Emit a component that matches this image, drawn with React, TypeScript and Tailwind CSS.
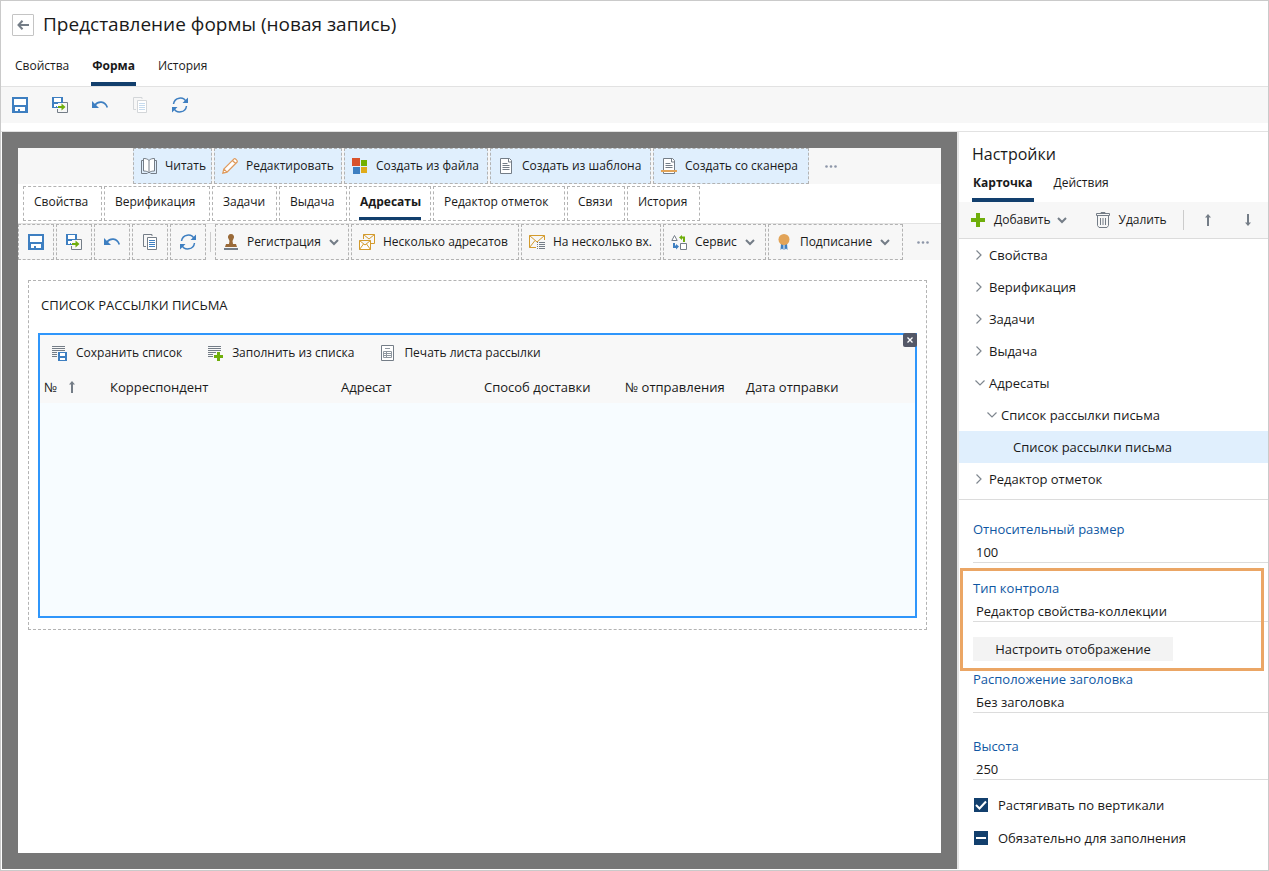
import { useEffect, useRef, type ReactNode } from 'react';
import clsx from 'clsx';

const BLUE = '#3e7fc1';
const GRAY = '#747d87';
const GREEN = '#6fae0b';
const ORANGE = '#e2a458';
const GOLD = '#d39a2c';

interface IconProps {
  children: ReactNode;
  crisp?: boolean;
  size?: number;
}

function Icon({ children, crisp, size = 16 }: IconProps) {
  return (
    <svg
      width={size}
      height={size}
      viewBox={`0 0 ${size} ${size}`}
      fill="none"
      shapeRendering={crisp ? 'crispEdges' : undefined}
      className="shrink-0"
      aria-hidden="true"
    >
      {children}
    </svg>
  );
}

const SaveIcon = () => (
  <Icon crisp>
    <path d="M0 0h16v16H0z" fill={BLUE} />
    <path d="M2 2h12v6H2zM3 10h10v4H3z" fill="#fff" />
    <path d="M6 12h2v2H6z" fill={BLUE} />
  </Icon>
);

const SaveCloseIcon = () => (
  <Icon>
    <path d="M0 0h11v11H0z" fill={BLUE} />
    <path d="M2 1h7v4H2zM2 7h6v3H2z" fill="#fff" />
    <path d="M4 9h1v1H4z" fill={BLUE} />
    <path d="M11 5.500h4.500v10h-10V12" stroke={GRAY} />
    <path d="M6 6h9v9H6z" fill="#f7f7f7" />
    <path d="M6 9h3.500V6.500L13.500 10l-4 3.500V11H6z" fill={GREEN} />
  </Icon>
);

const UndoIcon = () => (
  <Icon>
    <path d="M0 4v7h7z" fill={BLUE} />
    <path d="M3 8c3-4 10-4.500 12.300 2.500" stroke={BLUE} strokeWidth="1.600" />
  </Icon>
);

const CopyIcon = ({ muted }: { muted?: boolean }) => (
  <Icon>
    <path d="M10 2V.5H1.500v12H4" stroke={muted ? '#d3d6d9' : GRAY} />
    <path d="M5.500 3.500h9v12h-9z" stroke={muted ? '#d3d6d9' : GRAY} fill="#fff" />
    <path d="M7 6.500h6M7 8.500h6M7 10.500h6M7 12.500h6" stroke={muted ? '#c6dbee' : BLUE} />
  </Icon>
);

const RefreshIcon = () => (
  <Icon>
    <path d="M1.500 7C2.500 0 11.500-.8 14 4.500M14.500 9c-1 7-10 7.800-12.500 2.500" stroke={BLUE} strokeWidth="1.500" />
    <path d="M16 .5v5.500h-5.500zM0 15.500V10h5.500z" fill={BLUE} />
  </Icon>
);

const BookIcon = () => (
  <Icon>
    <path d="M3 2.500H.5v13h6M13 2.500h2.500v13h-6" stroke={GRAY} />
    <path d="M8 2.500C6.500.8 4.500.5 2.500.5v12.500c2.500 0 4.300.5 5.500 2 1.200-1.500 3-2 5.500-2V.5c-2 0-4 .3-5.500 2zM8 2.500V15" stroke={GRAY} fill="#fff" />
  </Icon>
);

const PencilIcon = () => (
  <Icon>
    <path d="M.8 15.200l1-4.200L12 .9c1-.9 4 1.800 3.100 3.100L5 14.200zM10.500 2.500l3 3M1.800 11L5 14.200" stroke="#df9a5c" strokeWidth="1.200" fill="#fff" />
  </Icon>
);

const WindowsIcon = () => (
  <Icon crisp>
    <path d="M0 0h8v8H0z" fill="#d9532c" />
    <path d="M9 2h6v6H9z" fill="#72b000" />
    <path d="M1 9h7v7H1z" fill={BLUE} />
    <path d="M9 9h6v6H9z" fill="#e0ab1a" />
  </Icon>
);

const PageIcon = () => (
  <Icon>
    <path d="M2.500.5h9l2 2v13h-11z" stroke={GRAY} fill="#fff" />
    <path d="M10.500 1v3h3" stroke={GRAY} />
    <path d="M4.500 5.500h5M4.500 7.500h7M4.500 9.500h7M4.500 11.500h7" stroke={GRAY} />
  </Icon>
);

const ScannerIcon = () => (
  <Icon>
    <path d="M2.500.5h9l2 2v13h-11z" stroke={GRAY} fill="#fff" />
    <path d="M10.500 1v3h3" stroke={GRAY} />
    <path d="M4.500 5.500h5M4.500 7.500h7M4.500 9.500h7" stroke={GRAY} />
    <path d="M0 12h16v2H0z" fill={ORANGE} />
  </Icon>
);

const StampIcon = () => (
  <Icon>
    <path d="M8 0a3 3 0 0 1 2.600 4.500L9.500 7l.5 3h3l1 3H2l1-3h3l.5-3-1.100-2.500A3 3 0 0 1 8 0z" fill="#9a6a38" />
    <path d="M1 14h14v2H1z" fill={GRAY} />
  </Icon>
);

const MailsIcon = () => (
  <Icon>
    <path d="M4.500 5V.5h11v9H12M4.500.5L10 5l5.500-4.500" stroke={GOLD} />
    <path d="M.5 6.500h11v9H.5zM.5 6.500L6 11l5.500-4.500M.5 15.500l4-5.500M11.500 15.500L7.500 10" stroke={GOLD} fill="#fff" />
  </Icon>
);

const MailListIcon = () => (
  <Icon>
    <path d="M7 13.500H.5v-12h15V6M.5 1.500L8 8l7.500-6.500M.5 13.500L6 6.500" stroke={GOLD} />
    <path d="M8 8.500h1M8 10.500h1M8 12.500h1M8 14.500h1M10 8.500h6M10 10.500h6M10 12.500h6M10 14.500h6" stroke={GRAY} />
  </Icon>
);

const ServiceIcon = () => (
  <Icon>
    <path d="M3.500 1.500L.8 6.500h5.400zM9.500 9.500h6v6h-6z" stroke={GRAY} fill="#fff" />
    <path d="M8 3.500L11 1v1.500h3V8h-2V4.500h-1V6z" fill={GREEN} />
    <path d="M8 12.500L5 10v1.500H4V9H2v5h3v1.500z" fill={BLUE} />
  </Icon>
);

const SignIcon = () => (
  <Icon>
    <path d="M5 9h2.500v7L6 14.500 4.500 16zM8.500 9H11l.5 7-1.500-1.500L8.500 16z" fill={BLUE} />
    <circle cx="8" cy="5.500" r="5.500" fill={ORANGE} />
  </Icon>
);

const ListSaveIcon = () => (
  <Icon>
    <path d="M0 1.500h13M0 3.500h13M0 5.500h13M0 7.500h5M0 9.500h5M0 11.500h5" stroke={GRAY} />
    <path d="M6 7h9v9H6z" fill={BLUE} />
    <path d="M8 8h5v3H8zM8 13h5v2H8z" fill="#fff" />
  </Icon>
);

const ListAddIcon = () => (
  <Icon>
    <path d="M0 1.500h13M0 3.500h13M0 5.500h13M0 7.500h8M0 9.500h5M0 11.500h5" stroke={GRAY} />
    <path d="M9 7h3v3h3v3h-3v3H9v-3H6v-3h3z" fill={GREEN} />
  </Icon>
);

const PrintListIcon = () => (
  <Icon>
    <path d="M1.500.5h12v15h-12z" stroke={GRAY} fill="#fff" />
    <path d="M5 3.500h5M3.500 6.500h8v6h-8zM3.500 8.500h8M3.500 10.500h8M6.500 6.500v6" stroke="#8f979f" />
  </Icon>
);

const PlusIcon = () => (
  <Icon crisp>
    <path d="M5 1h4v5h5v4H9v5H5v-5H0V6h5z" fill={GREEN} />
  </Icon>
);

const TrashIcon = () => (
  <Icon>
    <path d="M5 1.500V.5h4v1M.5 1.500h13v2H.5zM1.500 3.500h11v10l-1.500 2H3l-1.500-2z" stroke={GRAY} />
    <path d="M4.500 6v7M7 6v7M9.500 6v7" stroke={GRAY} />
  </Icon>
);

const ArrowIcon = ({ down }: { down?: boolean }) => (
  <svg width="6" height="12" viewBox="0 0 6 12" fill="none" className={clsx('shrink-0', down && 'rotate-180')} aria-hidden="true">
    <path d="M3 1v11" stroke={GRAY} strokeWidth="2" />
    <path d="M0 3.500L3 0l3 3.500z" fill={GRAY} />
  </svg>
);

const DropIcon = () => (
  <svg width="10" height="7" viewBox="0 0 10 7" fill="none" className="shrink-0" aria-hidden="true">
    <path d="M1 1l4 4 4-4" stroke={GRAY} strokeWidth="2" />
  </svg>
);

const MoreButton = () => (
  <button type="button" aria-label="Ещё" className="flex w-10 items-center justify-center self-stretch">
    <svg width="12" height="3" viewBox="0 0 12 3" fill="#8d96a8" aria-hidden="true">
      <circle cx="1.500" cy="1.500" r="1.300" />
      <circle cx="6" cy="1.500" r="1.300" />
      <circle cx="10.500" cy="1.500" r="1.300" />
    </svg>
  </button>
);

const mainActions = [
  { label: 'Сохранить', icon: <SaveIcon /> },
  { label: 'Сохранить и закрыть', icon: <SaveCloseIcon /> },
  { label: 'Отменить', icon: <UndoIcon /> },
  { label: 'Копировать', icon: <CopyIcon muted /> },
  { label: 'Обновить', icon: <RefreshIcon /> },
];

const formActions = [
  { label: 'Сохранить', icon: <SaveIcon /> },
  { label: 'Сохранить и закрыть', icon: <SaveCloseIcon /> },
  { label: 'Отменить', icon: <UndoIcon /> },
  { label: 'Копировать', icon: <CopyIcon /> },
  { label: 'Обновить', icon: <RefreshIcon /> },
];

const documentActions = [
  { label: 'Читать', icon: <BookIcon />, width: 'w-[79px]' },
  { label: 'Редактировать', icon: <PencilIcon />, width: 'w-32' },
  { label: 'Создать из файла', icon: <WindowsIcon />, width: 'w-36' },
  { label: 'Создать из шаблона', icon: <PageIcon />, width: 'w-[161px]' },
  { label: 'Создать со сканера', icon: <ScannerIcon />, width: 'w-[156px]' },
];

const formTabs = [
  { label: 'Свойства', width: 'w-[79px]' },
  { label: 'Верификация', width: 'w-[106px]' },
  { label: 'Задачи', width: 'w-[65px]' },
  { label: 'Выдача', width: 'w-[68px]' },
  { label: 'Адресаты', width: 'w-[82px]', active: true },
  { label: 'Редактор отметок', width: 'w-[132px]' },
  { label: 'Связи', width: 'w-[58px]' },
  { label: 'История', width: 'w-[73px]' },
];

const letterActions = [
  { label: 'Регистрация', icon: <StampIcon />, width: 'w-[134px]', menu: true },
  { label: 'Несколько адресатов', icon: <MailsIcon />, width: 'w-[168px]' },
  { label: 'На несколько вх.', icon: <MailListIcon />, width: 'w-[140px]' },
  { label: 'Сервис', icon: <ServiceIcon />, width: 'w-[103px]', menu: true },
  { label: 'Подписание', icon: <SignIcon />, width: 'w-[135px]', menu: true },
];

const listActions = [
  { label: 'Сохранить список', icon: <ListSaveIcon /> },
  { label: 'Заполнить из списка', icon: <ListAddIcon /> },
  { label: 'Печать листа рассылки', icon: <PrintListIcon /> },
];

const tree = [
  { label: 'Свойства', pad: 'pl-4' },
  { label: 'Верификация', pad: 'pl-4' },
  { label: 'Задачи', pad: 'pl-4' },
  { label: 'Выдача', pad: 'pl-4' },
  { label: 'Адресаты', pad: 'pl-4', open: true },
  { label: 'Список рассылки письма', pad: 'pl-7', open: true },
  { label: 'Список рассылки письма', pad: 'pl-10', selected: true },
  { label: 'Редактор отметок', pad: 'pl-4' },
];

function Header() {
  return (
    <header>
      <div className="flex h-12 items-center gap-[9px] pl-[11px]">
        <button
          type="button"
          aria-label="Назад"
          className="flex size-[22px] items-center justify-center rounded-[1px] border border-[#c4c4c4]"
        >
          <svg width="12" height="10" viewBox="0 0 12 10" fill="none" stroke={GRAY} strokeWidth="2" aria-hidden="true">
            <path d="M12 5H1.500M5.500.8L1.500 5l4 4.200" />
          </svg>
        </button>
        <h1 className="pb-0.5 text-[19px] leading-6">Представление формы (новая запись)</h1>
      </div>
      <nav className="flex h-[38px] items-stretch gap-[21px] border-b border-[#e2e2e2] pl-[13px]">
        {['Свойства', 'Форма', 'История'].map(tab => (
          <a
            key={tab}
            href="#"
            className={clsx(
              'flex items-center border-b-4 px-px',
              tab === 'Форма' ? 'border-[#123f6d] font-bold' : 'border-transparent',
            )}
          >
            {tab}
          </a>
        ))}
      </nav>
      <div className="flex h-9 gap-6 bg-[#f7f7f7] pl-[11px]">
        {mainActions.map(action => (
          <button key={action.label} type="button" aria-label={action.label} className="flex items-center">
            {action.icon}
          </button>
        ))}
      </div>
    </header>
  );
}

function MailingList() {
  return (
    <section className="mt-5 mr-[14px] ml-[10px] border border-dashed border-[#b3b3b3] px-[9px] pb-[11px]">
      <h2 className="mb-1 flex h-12 items-center pl-[3px] text-[13px] uppercase">Список рассылки письма</h2>
      <div className="relative flex h-[285px] flex-col border-2 border-[#2f96fb] bg-[#f7fcff]">
        <div className="flex h-9 items-center gap-[26px] bg-[#f8f8f8] pl-3">
          {listActions.map(action => (
            <button key={action.label} type="button" className="flex items-center gap-2 whitespace-nowrap">
              {action.icon}
              {action.label}
            </button>
          ))}
        </div>
        <table className="w-full table-fixed bg-[#f8f8f8] text-left text-[13px]">
          <thead>
            <tr className="h-8 whitespace-nowrap [&>th]:px-1 [&>th]:font-normal">
              <th scope="col" className="w-[66px]">
                <span className="flex items-center gap-3">
                  №
                  <ArrowIcon />
                </span>
              </th>
              <th scope="col" className="w-[231px]">Корреспондент</th>
              <th scope="col" className="w-[143px]">Адресат</th>
              <th scope="col" className="w-[141px]">Способ доставки</th>
              <th scope="col" className="w-[121px]">№ отправления</th>
              <th scope="col">Дата отправки</th>
            </tr>
          </thead>
        </table>
        <button
          type="button"
          aria-label="Удалить элемент"
          className="absolute -top-0.5 -right-0.5 flex size-[14px] items-center justify-center rounded-xs bg-[#545867]"
        >
          <svg width="6" height="6" viewBox="0 0 6 6" stroke="#fff" strokeWidth="1.300" aria-hidden="true">
            <path d="M.5.5l5 5M5.500.5l-5 5" />
          </svg>
        </button>
      </div>
    </section>
  );
}

function FormCanvas() {
  return (
    <main className="flex min-w-0 flex-1 flex-col bg-[#777] p-4">
      <div className="flex-1 overflow-hidden bg-white">
        <div className="flex h-9 items-center gap-0.5 bg-[#f7f7f7] pl-[115px]">
          {documentActions.map(action => (
            <button
              key={action.label}
              type="button"
              className={clsx(
                'flex h-9 shrink-0 items-center gap-2 border border-dashed border-[#b3b3b3] bg-[#e0effd] pl-[7px] whitespace-nowrap',
                action.width,
              )}
            >
              {action.icon}
              {action.label}
            </button>
          ))}
          <MoreButton />
        </div>
        <nav className="flex gap-0.5 border-b border-[#e2e2e2] py-0.5 pl-[5px]">
          {formTabs.map(tab => (
            <a
              key={tab.label}
              href="#"
              className={clsx(
                'flex h-[35px] shrink-0 border border-dashed border-[#b3b3b3] px-[9px] whitespace-nowrap',
                tab.width,
              )}
            >
              <span
                className={clsx(
                  'flex flex-1 items-center border-b-3 pl-px',
                  tab.active ? 'border-[#123f6d] font-bold' : 'border-transparent',
                )}
              >
                {tab.label}
              </span>
            </a>
          ))}
        </nav>
        <div className="flex h-9 items-center gap-0.5 bg-[#f7f7f7]">
          {formActions.map(action => (
            <button
              key={action.label}
              type="button"
              aria-label={action.label}
              className="flex size-9 shrink-0 items-center justify-center border border-dashed border-[#b3b3b3]"
            >
              {action.icon}
            </button>
          ))}
          <div className="mx-0.5 h-5 w-px bg-[#ccc]" />
          {letterActions.map(action => (
            <button
              key={action.label}
              type="button"
              className={clsx(
                'flex h-9 shrink-0 items-center gap-2 border border-dashed border-[#b3b3b3] pl-[7px] whitespace-nowrap',
                action.width,
              )}
            >
              {action.icon}
              {action.label}
              {action.menu && <DropIcon />}
            </button>
          ))}
          <MoreButton />
        </div>
        <MailingList />
      </div>
    </main>
  );
}

interface FieldProps {
  id: string;
  label: string;
  value: string;
  select?: boolean;
}

function Field({ id, label, value, select }: FieldProps) {
  const control = 'h-6 w-full appearance-none border-b border-[#dcdcdc] pt-0.5 pl-[3px] leading-5 outline-none';
  return (
    <div className="flex flex-col">
      <label htmlFor={id} className="h-5 leading-5 text-[#0f57a3]">
        {label}
      </label>
      {select ? (
        <select id={id} className={control}>
          <option>{value}</option>
        </select>
      ) : (
        <input id={id} type="text" defaultValue={value} className={control} />
      )}
    </div>
  );
}

function CheckField({ label, mixed }: { label: string; mixed?: boolean }) {
  const ref = useRef<HTMLInputElement>(null);

  useEffect(() => {
    if (ref.current) ref.current.indeterminate = Boolean(mixed);
  }, [mixed]);

  return (
    <label className="flex h-5 items-center gap-[10px] pl-px">
      <span className="grid size-[14px] place-items-center bg-[#123f6d]">
        <input
          ref={ref}
          type="checkbox"
          defaultChecked={!mixed}
          className="col-start-1 row-start-1 size-[14px] appearance-none"
        />
        <svg
          width="12"
          height="10"
          viewBox="0 0 12 10"
          fill="none"
          stroke="#fff"
          strokeWidth="2"
          className="pointer-events-none col-start-1 row-start-1"
          aria-hidden="true"
        >
          {mixed ? <path d="M1 5h10" /> : <path d="M1 5l3.500 3.500L11 1.500" />}
        </svg>
      </span>
      {label}
    </label>
  );
}

function SettingsPanel() {
  return (
    <aside className="w-[311px] shrink-0 border-l-2 border-[#e6e6e6] text-[13px]">
      <h2 className="flex h-9 items-end pl-[13px] text-[16px] leading-7">Настройки</h2>
      <nav className="flex h-[34px] items-stretch gap-5 pl-[13px] text-[12px]">
        <a href="#" className="flex items-center border-b-4 border-[#123f6d] px-px font-bold">
          Карточка
        </a>
        <a href="#" className="flex items-center border-b-4 border-transparent">
          Действия
        </a>
      </nav>
      <div className="flex h-[37px] items-center border-b border-[#dcdcdc] bg-[#f7f7f7] pl-3 text-[12px]">
        <button type="button" className="flex items-center gap-[7px]">
          <PlusIcon />
          Добавить
          <DropIcon />
        </button>
        <button type="button" className="ml-[29px] flex items-center gap-[6px]">
          <TrashIcon />
          Удалить
        </button>
        <div className="ml-4 h-5 w-px bg-[#ccc]" />
        <button type="button" aria-label="Выше" className="ml-[21px]">
          <ArrowIcon />
        </button>
        <button type="button" aria-label="Ниже" className="ml-[34px]">
          <ArrowIcon down />
        </button>
      </div>
      <ul className="border-b border-[#dcdcdc] pb-1">
        {tree.map((node, index) => (
          <li
            key={index}
            className={clsx('flex h-8 items-center gap-1', node.pad, node.selected && 'bg-[#e0effd]')}
          >
            {node.selected ? (
              <span className="w-[10px]" />
            ) : (
              <svg width="10" height="10" viewBox="0 0 10 10" fill="none" stroke="#7f878f" strokeWidth="1.200" aria-hidden="true">
                {node.open ? <path d="M.5 2.500L5 7l4.500-4.500" /> : <path d="M1.500.5L6 5 1.500 9.500" />}
              </svg>
            )}
            {node.label}
          </li>
        ))}
      </ul>
      <form className="flex flex-col pt-[19px] pl-[14px]">
        <Field id="size" label="Относительный размер" value="100" />
        <div className="relative mt-[15px] mb-2">
          <Field id="control" label="Тип контрола" value="Редактор свойства-коллекции" select />
          <button type="button" className="mt-[15px] block h-6 w-[200px] bg-[#f3f3f3]">
            Настроить отображение
          </button>
          <div className="pointer-events-none absolute -top-[10px] right-1 -bottom-[10px] -left-[13px] border-3 border-[#eba665]" />
        </div>
        <Field id="caption" label="Расположение заголовка" value="Без заголовка" select />
        <div className="mt-[23px] mb-[15px]">
          <Field id="height" label="Высота" value="250" />
        </div>
        <div className="flex flex-col gap-[13px]">
          <CheckField label="Растягивать по вертикали" />
          <CheckField label="Обязательно для заполнения" mixed />
        </div>
      </form>
    </aside>
  );
}

export default function App() {
  return (
    <div className="flex min-h-screen flex-col border border-[#cacaca] bg-white font-['Open_Sans',sans-serif] text-[12px] leading-5 text-[#1a1a1a]">
      <Header />
      <div className="mt-2 flex flex-1 border-t border-[#e2e2e2] pb-px pl-px">
        <FormCanvas />
        <SettingsPanel />
      </div>
    </div>
  );
}
